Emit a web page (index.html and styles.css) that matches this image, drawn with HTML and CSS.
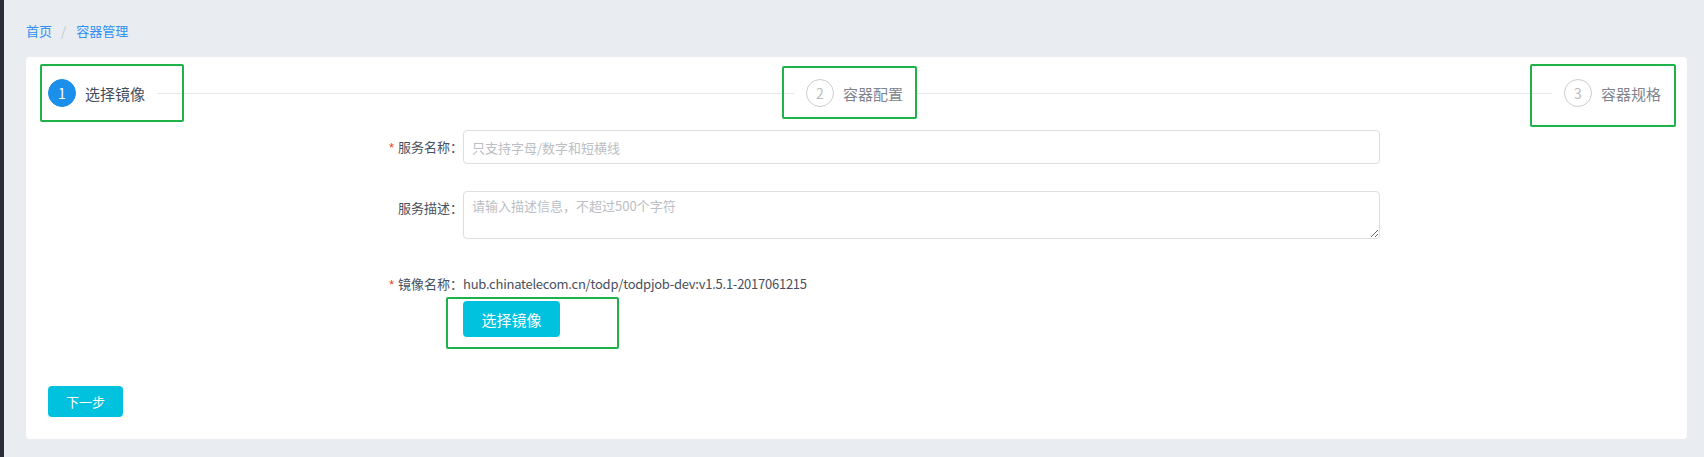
FILE: index.html
```html
<!DOCTYPE html>
<html lang="zh-CN">
<head>
<meta charset="utf-8">
<title>容器管理</title>
<link rel="stylesheet" href="styles.css">
</head>
<body>
<div class="layout">
  <div class="sidebar"></div>
  <main class="main">
    <nav class="breadcrumb">
      <a class="crumb">首页</a>
      <span class="sep">/</span>
      <a class="crumb">容器管理</a>
    </nav>
    <section class="card">
      <div class="steps">
        <div class="step active">
          <span class="step-icon">1</span>
          <span class="step-title">选择镜像</span>
        </div>
        <div class="step-line"></div>
        <div class="step">
          <span class="step-icon">2</span>
          <span class="step-title">容器配置</span>
        </div>
        <div class="step-line"></div>
        <div class="step">
          <span class="step-icon">3</span>
          <span class="step-title">容器规格</span>
        </div>
      </div>

      <form class="form">
        <label class="form-label required">服务名称：</label>
        <div class="form-control">
          <input class="input" type="text" placeholder="只支持字母/数字和短横线">
        </div>

        <label class="form-label">服务描述：</label>
        <div class="form-control">
          <textarea class="textarea" placeholder="请输入描述信息，不超过500个字符"></textarea>
        </div>

        <label class="form-label required row-image">镜像名称：</label>
        <div class="form-control row-image">
          <div class="value">hub.chinatelecom.cn/todp/todpjob-dev:v1.5.1-2017061215</div>
          <button type="button" class="btn btn-large">选择镜像</button>
        </div>
      </form>

      <div class="actions">
        <button type="button" class="btn btn-small">下一步</button>
      </div>
    </section>
  </main>
</div>

<div class="mark mark-step1"></div>
<div class="mark mark-step2"></div>
<div class="mark mark-step3"></div>
<div class="mark mark-btn"></div>
</body>
</html>
```

FILE: styles.css
```css
* { box-sizing: border-box; }

html, body {
  margin: 0;
  padding: 0;
  height: 100%;
}

body {
  position: relative;
  background: #e9ecf1;
  font-family: "Noto Sans CJK SC", "Microsoft YaHei", sans-serif;
  font-size: 13px;
  color: #495060;
  overflow: hidden;
}

.layout {
  display: flex;
  min-height: 100%;
}

.sidebar {
  width: 4px;
  flex: 0 0 4px;
  background: #2c2e37;
}

.main {
  flex: 1;
  padding: 22px 17px 18px 22px;
}

.breadcrumb {
  display: flex;
  align-items: center;
  height: 18px;
  line-height: 18px;
  margin-bottom: 17px;
  font-size: 13px;
}

.crumb {
  color: #3091f2;
}

.sep {
  color: #c5c8ce;
  padding: 0 10px 0 9px;
}

.card {
  background: #fff;
  border-radius: 4px;
  padding: 22px 26px 22px 22px;
}

/* Steps */
.steps {
  display: flex;
  align-items: center;
  height: 28px;
}

.step {
  display: flex;
  align-items: center;
  gap: 9px;
}

.step-icon {
  width: 28px;
  height: 28px;
  border-radius: 50%;
  border: 1px solid #ccc;
  color: #bbb;
  display: flex;
  align-items: center;
  justify-content: center;
  font-size: 14px;
  line-height: 1;
}

.step-title {
  font-size: 15px;
  color: #80848f;
}

.step.active .step-icon {
  background: #1b8fe9;
  border-color: #1b8fe9;
  color: #fff;
}

.step.active .step-title {
  color: #464c5b;
}

.step-line {
  flex: 1;
  height: 1px;
  background: #e6e6e6;
  margin: 0 12px;
}

/* Form */
.form {
  display: grid;
  grid-template-columns: 100px 917px;
  row-gap: 27px;
  margin: 23px 0 0 315px;
}

.form-label {
  text-align: right;
  line-height: 34px;
  height: 34px;
  font-size: 13px;
  color: #495060;
}

.form-label.required::before {
  content: "*";
  color: #ed3f14;
  margin-right: 4px;
  font-family: "Liberation Sans", sans-serif;
  font-size: 13px;
}

.row-image {
  margin-top: 1px;
}

.input,
.textarea {
  display: block;
  width: 100%;
  border: 1px solid #dddee1;
  border-radius: 4px;
  padding: 4px 8px;
  font-family: inherit;
  font-size: 13px;
  color: #495060;
  background: #fff;
  outline: none;
}

.input {
  height: 34px;
}

.textarea {
  height: 48px;
  resize: vertical;
  padding-top: 4px;
  line-height: 20px;
}

.input::placeholder,
.textarea::placeholder {
  color: #bbbec4;
}

.value {
  height: 34px;
  line-height: 34px;
  color: #495060;
  font-size: 13px;
  letter-spacing: -0.25px;
}

.btn {
  border: 0;
  border-radius: 4px;
  background: #00c1de;
  color: #fff;
  font-family: inherit;
  cursor: pointer;
  padding: 0;
}

.btn-large {
  width: 97px;
  height: 36px;
  font-size: 15px;
}

.actions {
  margin-top: 49px;
  display: flex;
}

.btn-small {
  width: 75px;
  height: 31px;
  font-size: 13px;
}

/* Annotation marks drawn over the screenshot */
.mark {
  position: absolute;
  border: 2px solid #1fb14a;
  border-radius: 2px;
  pointer-events: none;
}

.mark-step1 { left: 40px; top: 64px; width: 144px; height: 58px; }
.mark-step2 { left: 782px; top: 66px; width: 135px; height: 53px; }
.mark-step3 { left: 1530px; top: 64px; width: 146px; height: 63px; }
.mark-btn { left: 446px; top: 297px; width: 173px; height: 52px; }
```
